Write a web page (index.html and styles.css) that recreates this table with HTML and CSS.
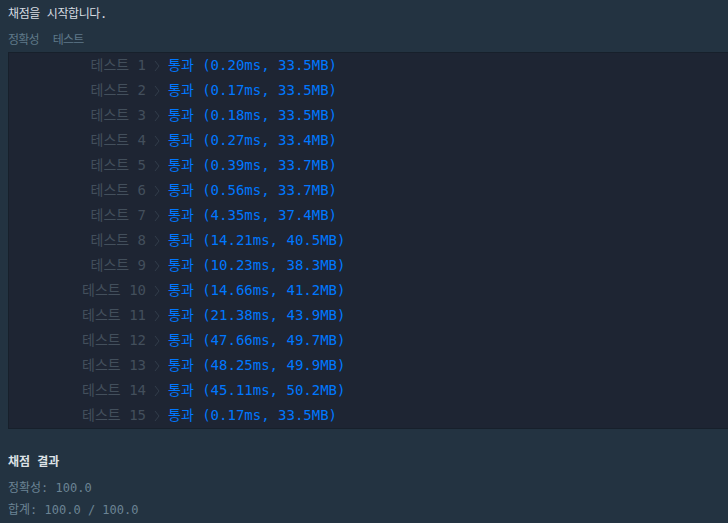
FILE: index.html
```html
<!DOCTYPE html>
<html lang="ko">
<head>
<meta charset="utf-8">
<link rel="stylesheet" href="styles.css">
</head>
<body>
<div class="console">
  <p class="start">채점을 시작합니다.</p>
  <div class="tabs"><span class="tab">정확성</span><span class="tab">테스트</span></div>
  <table class="results">
    <tbody>
      <tr><td class="label">테스트 1</td><td class="chev"><svg viewBox="0 0 6 12" width="6" height="12"><path d="M1 1 L5 6 L1 11" fill="none" stroke="currentColor" stroke-width="1"/></svg></td><td class="pass">통과 (0.20ms, 33.5MB)</td></tr>
      <tr><td class="label">테스트 2</td><td class="chev"><svg viewBox="0 0 6 12" width="6" height="12"><path d="M1 1 L5 6 L1 11" fill="none" stroke="currentColor" stroke-width="1"/></svg></td><td class="pass">통과 (0.17ms, 33.5MB)</td></tr>
      <tr><td class="label">테스트 3</td><td class="chev"><svg viewBox="0 0 6 12" width="6" height="12"><path d="M1 1 L5 6 L1 11" fill="none" stroke="currentColor" stroke-width="1"/></svg></td><td class="pass">통과 (0.18ms, 33.5MB)</td></tr>
      <tr><td class="label">테스트 4</td><td class="chev"><svg viewBox="0 0 6 12" width="6" height="12"><path d="M1 1 L5 6 L1 11" fill="none" stroke="currentColor" stroke-width="1"/></svg></td><td class="pass">통과 (0.27ms, 33.4MB)</td></tr>
      <tr><td class="label">테스트 5</td><td class="chev"><svg viewBox="0 0 6 12" width="6" height="12"><path d="M1 1 L5 6 L1 11" fill="none" stroke="currentColor" stroke-width="1"/></svg></td><td class="pass">통과 (0.39ms, 33.7MB)</td></tr>
      <tr><td class="label">테스트 6</td><td class="chev"><svg viewBox="0 0 6 12" width="6" height="12"><path d="M1 1 L5 6 L1 11" fill="none" stroke="currentColor" stroke-width="1"/></svg></td><td class="pass">통과 (0.56ms, 33.7MB)</td></tr>
      <tr><td class="label">테스트 7</td><td class="chev"><svg viewBox="0 0 6 12" width="6" height="12"><path d="M1 1 L5 6 L1 11" fill="none" stroke="currentColor" stroke-width="1"/></svg></td><td class="pass">통과 (4.35ms, 37.4MB)</td></tr>
      <tr><td class="label">테스트 8</td><td class="chev"><svg viewBox="0 0 6 12" width="6" height="12"><path d="M1 1 L5 6 L1 11" fill="none" stroke="currentColor" stroke-width="1"/></svg></td><td class="pass">통과 (14.21ms, 40.5MB)</td></tr>
      <tr><td class="label">테스트 9</td><td class="chev"><svg viewBox="0 0 6 12" width="6" height="12"><path d="M1 1 L5 6 L1 11" fill="none" stroke="currentColor" stroke-width="1"/></svg></td><td class="pass">통과 (10.23ms, 38.3MB)</td></tr>
      <tr><td class="label">테스트 10</td><td class="chev"><svg viewBox="0 0 6 12" width="6" height="12"><path d="M1 1 L5 6 L1 11" fill="none" stroke="currentColor" stroke-width="1"/></svg></td><td class="pass">통과 (14.66ms, 41.2MB)</td></tr>
      <tr><td class="label">테스트 11</td><td class="chev"><svg viewBox="0 0 6 12" width="6" height="12"><path d="M1 1 L5 6 L1 11" fill="none" stroke="currentColor" stroke-width="1"/></svg></td><td class="pass">통과 (21.38ms, 43.9MB)</td></tr>
      <tr><td class="label">테스트 12</td><td class="chev"><svg viewBox="0 0 6 12" width="6" height="12"><path d="M1 1 L5 6 L1 11" fill="none" stroke="currentColor" stroke-width="1"/></svg></td><td class="pass">통과 (47.66ms, 49.7MB)</td></tr>
      <tr><td class="label">테스트 13</td><td class="chev"><svg viewBox="0 0 6 12" width="6" height="12"><path d="M1 1 L5 6 L1 11" fill="none" stroke="currentColor" stroke-width="1"/></svg></td><td class="pass">통과 (48.25ms, 49.9MB)</td></tr>
      <tr><td class="label">테스트 14</td><td class="chev"><svg viewBox="0 0 6 12" width="6" height="12"><path d="M1 1 L5 6 L1 11" fill="none" stroke="currentColor" stroke-width="1"/></svg></td><td class="pass">통과 (45.11ms, 50.2MB)</td></tr>
      <tr><td class="label">테스트 15</td><td class="chev"><svg viewBox="0 0 6 12" width="6" height="12"><path d="M1 1 L5 6 L1 11" fill="none" stroke="currentColor" stroke-width="1"/></svg></td><td class="pass">통과 (0.17ms, 33.5MB)</td></tr>
    </tbody>
  </table>
  <p class="summary-title">채점 결과</p>
  <p class="summary">정확성: 100.0</p>
  <p class="summary">합계: 100.0 / 100.0</p>
</div>
</body>
</html>
```

FILE: styles.css
```css
html, body {
  margin: 0;
  padding: 0;
  background: #233341;
  overflow: hidden;
}
body {
  font-family: "DejaVu Sans Mono", "Noto Sans CJK KR", monospace;
  font-size: 12px;
  color: #d5dbe0;
}
.console {
  padding: 5px 0 0 8px;
}
p {
  margin: 0;
}
.start {
  line-height: 18px;
  color: #d6dce2;
  letter-spacing: -0.4px;
}
.tabs {
  margin-top: 9px;
  line-height: 16px;
  display: flex;
  gap: 14px;
  color: #5f7989;
  letter-spacing: -0.8px;
}
.results {
  margin-top: 4px;
  width: 740px;
  border-collapse: collapse;
  background: #1e2533;
  border: 1px solid #17202b;
  font-size: 14px;
}
.results td {
  height: 25px;
  padding: 0;
  line-height: 25px;
  white-space: nowrap;
}
.label {
  width: 137px;
  text-align: right;
  color: #434f5c;
}
.chev {
  width: 22px;
  color: #323d4b;
}
.chev svg {
  display: block;
  margin-left: 8px;
}
.pass {
  color: #0078ff;
}
.summary-title {
  margin-top: 24px;
  padding-bottom: 2px;
  line-height: 18px;
  font-weight: bold;
  color: #dde2e6;
}
.summary {
  margin-top: 8px;
  line-height: 14px;
  color: #6b8394;
}
```
